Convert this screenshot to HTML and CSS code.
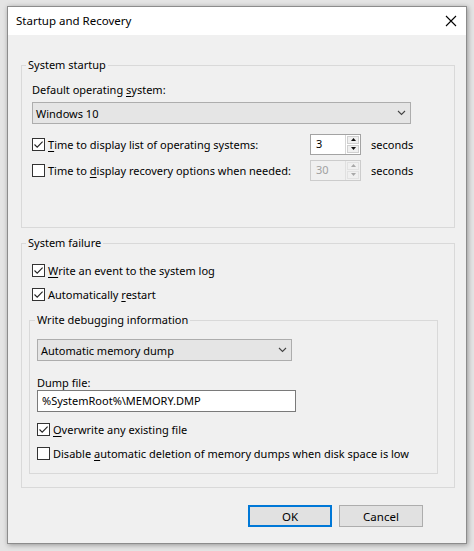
FILE: index.html
```html
<!DOCTYPE html>
<html lang="en">
<head>
<meta charset="utf-8">
<title>Startup and Recovery</title>
<link rel="stylesheet" href="styles.css">
</head>
<body>
<div class="dialog">
  <div class="titlebar">
    <span class="title">Startup and Recovery</span>
    <svg class="close" width="12" height="12" viewBox="0 0 12 12"><path d="M1 1 L11 11 M11 1 L1 11" stroke="#000" stroke-width="1.1" fill="none"/></svg>
  </div>

  <fieldset class="group g1">
    <legend>System startup</legend>
    <div class="label first">Default operating <u>s</u>ystem:</div>
    <div class="combo os">
      <span>Windows 10</span>
      <svg class="chev" width="9" height="6" viewBox="0 0 9 6"><path d="M1 1 L4.5 4.5 L8 1" stroke="#444" stroke-width="1.1" fill="none"/></svg>
    </div>
    <div class="row r1">
      <label class="check wide">
        <span class="box"><svg width="11" height="11" viewBox="0 0 11 11"><path d="M1.5 5.5 L4.2 8.2 L9.6 2.6" stroke="#222" stroke-width="1.1" fill="none"/></svg></span>
        <span><u>T</u>ime to display list of operating systems:</span>
      </label>
      <div class="spin">
        <span class="val">3</span>
        <div class="btns">
          <span class="sb"><svg width="5" height="3" viewBox="0 0 5 3"><path d="M0 3 L2.5 0 L5 3 Z" fill="#111"/></svg></span>
          <span class="sb"><svg width="5" height="3" viewBox="0 0 5 3"><path d="M0 0 L2.5 3 L5 0 Z" fill="#111"/></svg></span>
        </div>
      </div>
      <span class="unit">seconds</span>
    </div>
    <div class="row r2">
      <label class="check wide">
        <span class="box"></span>
        <span>Time to <u>d</u>isplay recovery options when needed:</span>
      </label>
      <div class="spin disabled">
        <span class="val">30</span>
        <div class="btns">
          <span class="sb"><svg width="5" height="3" viewBox="0 0 5 3"><path d="M0 3 L2.5 0 L5 3 Z" fill="#a8a8a8"/></svg></span>
          <span class="sb"><svg width="5" height="3" viewBox="0 0 5 3"><path d="M0 0 L2.5 3 L5 0 Z" fill="#a8a8a8"/></svg></span>
        </div>
      </div>
      <span class="unit">seconds</span>
    </div>
  </fieldset>

  <fieldset class="group g2">
    <legend>System failure</legend>
    <label class="check crow c1">
      <span class="box"><svg width="11" height="11" viewBox="0 0 11 11"><path d="M1.5 5.5 L4.2 8.2 L9.6 2.6" stroke="#222" stroke-width="1.1" fill="none"/></svg></span>
      <span><u>W</u>rite an event to the system log</span>
    </label>
    <label class="check crow c2">
      <span class="box"><svg width="11" height="11" viewBox="0 0 11 11"><path d="M1.5 5.5 L4.2 8.2 L9.6 2.6" stroke="#222" stroke-width="1.1" fill="none"/></svg></span>
      <span>Automatically <u>r</u>estart</span>
    </label>

    <fieldset class="group g3">
      <legend>Write debugging information</legend>
      <div class="combo dump">
        <span>Automatic memory dump</span>
        <svg class="chev" width="9" height="6" viewBox="0 0 9 6"><path d="M1 1 L4.5 4.5 L8 1" stroke="#444" stroke-width="1.1" fill="none"/></svg>
      </div>
      <div class="label dumplabel">Dump file:</div>
      <div class="textbox">%SystemRoot%\MEMORY.DMP</div>
      <label class="check crow c3">
        <span class="box"><svg width="11" height="11" viewBox="0 0 11 11"><path d="M1.5 5.5 L4.2 8.2 L9.6 2.6" stroke="#222" stroke-width="1.1" fill="none"/></svg></span>
        <span><u>O</u>verwrite any existing file</span>
      </label>
      <label class="check crow c4">
        <span class="box"></span>
        <span>Disable <u>a</u>utomatic deletion of memory dumps when disk space is low</span>
      </label>
    </fieldset>
  </fieldset>

  <div class="buttons">
    <button class="btn default">OK</button>
    <button class="btn">Cancel</button>
  </div>
</div>
</body>
</html>
```

FILE: styles.css
```css
html, body {
  margin: 0;
  padding: 0;
}
body {
  background: #e4e4e4;
  font-family: "Noto Sans", "Open Sans", sans-serif;
  font-size: 11px;
  color: #000;
  width: 474px;
  height: 551px;
  overflow: hidden;
}
u { text-decoration-thickness: 1px; text-underline-offset: 2px; }

.dialog {
  box-sizing: border-box;
  margin: 6px 0 0 7px;
  width: 460px;
  height: 538px;
  background: #f0f0f0;
  border: 1px solid #8c8c8c;
  box-shadow: 1px 1px 5px rgba(0,0,0,0.35);
  display: flex;
  flex-direction: column;
}

.titlebar {
  height: 28px;
  background: #fff;
  display: flex;
  align-items: center;
  justify-content: space-between;
  padding: 0 8px 0 8px;
  flex: none;
}
.title { line-height: 28px; font-size: 11.5px; }
.close { margin-right: 1px; }

.group {
  border: 1px solid #d9d9d9;
  margin: 0;
  min-width: 0;
}
.group legend {
  padding: 0 2px;
  line-height: 16px;
}

.g1 {
  margin: 22px 11px 0 13px;
  padding: 0 10px 46px 10px;
}
.g1 legend { margin-left: -6px; }

.label { line-height: 16px; white-space: nowrap; }
.label.first { margin-top: 9px; }

.combo {
  box-sizing: border-box;
  height: 22px;
  background: #e5e5e5;
  border: 1px solid #adadad;
  display: flex;
  align-items: center;
  justify-content: space-between;
  padding: 0 4px 0 3px;
}
.combo.os { margin-top: 4px; width: 379px; }
.combo.dump { margin-top: 11px; width: 255px; }

.row {
  display: flex;
  align-items: center;
  height: 22px;
}
.r1 { margin-top: 9px; }
.r2 { margin-top: 4px; }

.check {
  display: flex;
  align-items: center;
  white-space: nowrap;
}
.check.wide { width: 278px; flex: none; }
.box {
  box-sizing: border-box;
  width: 13px;
  height: 13px;
  border: 1px solid #333;
  background: #fff;
  margin-right: 3px;
  flex: none;
  display: flex;
  align-items: center;
  justify-content: center;
}
.box svg { display: block; }

.spin {
  box-sizing: border-box;
  width: 51px;
  height: 21px;
  background: #fff;
  border: 1px solid #a3a3a3;
  display: flex;
  flex: none;
}
.spin .val {
  flex: 1;
  padding-left: 5px;
  line-height: 18px;
}
.spin .btns {
  width: 15px;
  display: flex;
  flex-direction: column;
  border-left: 1px solid #d6d6d6;
  padding: 1px;
  gap: 1px;
  box-sizing: border-box;
}
.spin .sb {
  flex: 1;
  background: #f0f0f0;
  border: 1px solid #d0d0d0;
  display: flex;
  align-items: center;
  justify-content: center;
}
.spin .sb svg { display: block; }
.spin.disabled { background: #f0f0f0; border-color: #cccccc; color: #a0a0a0; }
.spin.disabled .btns { border-left-color: #e0e0e0; }
.spin.disabled .sb { border-color: #e2e2e2; }

.unit { margin-left: 10px; }

.g2 {
  margin: 7px 11px 0 13px;
  padding: 0 16px 13px 7px;
}
.g2 legend { margin-left: -3px; }

.crow { height: 18px; margin-left: 3px; }
.c1 { margin-top: 10px; }
.c2 { margin-top: 6px; }

.g3 {
  margin: 9px 0 0 0;
  padding: 0 7px 11px 7px;
}
.g3 legend { margin-left: -2px; }

.dumplabel { margin-top: 15px; line-height: 14px; }
.textbox {
  box-sizing: border-box;
  width: 259px;
  height: 22px;
  background: #fff;
  border: 1px solid #7a7a7a;
  padding-left: 4px;
  line-height: 20px;
  white-space: nowrap;
}
.g3 .crow { margin-left: 0; }
.c3 { margin-top: 8px; }
.c4 { margin-top: 6px; }

.buttons {
  display: flex;
  justify-content: flex-end;
  gap: 7px;
  margin-top: 17px;
  padding-right: 43px;
}
.btn {
  box-sizing: border-box;
  width: 84px;
  height: 22px;
  font: inherit;
  font-size: 11.5px;
  color: #000;
  background: #e1e1e1;
  border: 1px solid #adadad;
  padding: 0;
  margin: 0;
}
.btn.default {
  border: 2px solid #0078d7;
}
```
